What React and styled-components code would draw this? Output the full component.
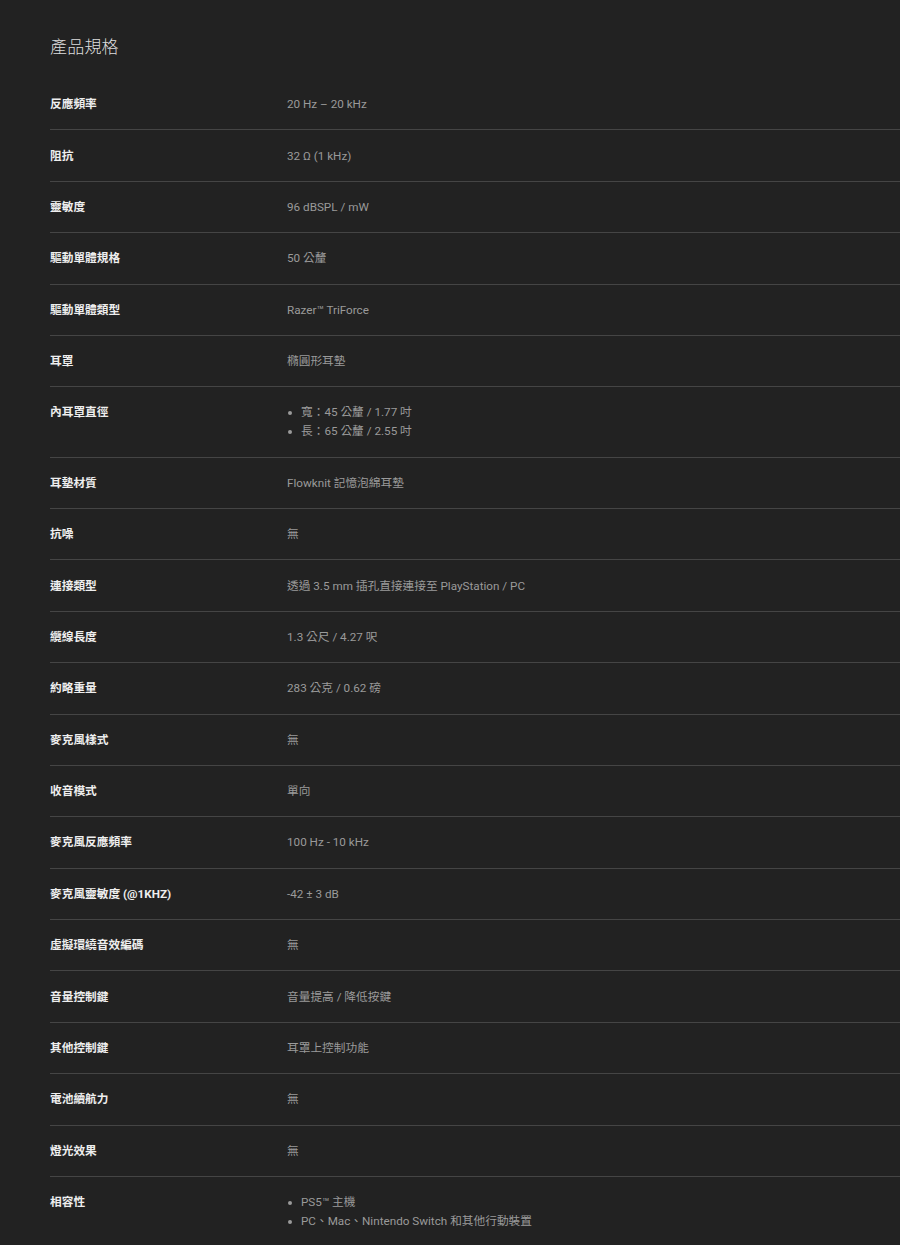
import React from "react";
import styled, { createGlobalStyle } from "styled-components";

const specs = [
  { label: "反應頻率", value: "20 Hz – 20 kHz" },
  { label: "阻抗", value: "32 Ω (1 kHz)" },
  { label: "靈敏度", value: "96 dBSPL / mW" },
  { label: "驅動單體規格", value: "50 公釐" },
  { label: "驅動單體類型", value: "Razer™ TriForce" },
  { label: "耳罩", value: "橢圓形耳墊" },
  { label: "內耳罩直徑", list: ["寬：45 公釐 / 1.77 吋", "長：65 公釐 / 2.55 吋"] },
  { label: "耳墊材質", value: "Flowknit 記憶泡綿耳墊" },
  { label: "抗噪", value: "無" },
  { label: "連接類型", value: "透過 3.5 mm 插孔直接連接至 PlayStation / PC" },
  { label: "纜線長度", value: "1.3 公尺 / 4.27 呎" },
  { label: "約略重量", value: "283 公克 / 0.62 磅" },
  { label: "麥克風樣式", value: "無" },
  { label: "收音模式", value: "單向" },
  { label: "麥克風反應頻率", value: "100 Hz - 10 kHz" },
  { label: "麥克風靈敏度 (@1KHZ)", value: "-42 ± 3 dB" },
  { label: "虛擬環繞音效編碼", value: "無" },
  { label: "音量控制鍵", value: "音量提高 / 降低按鍵" },
  { label: "其他控制鍵", value: "耳罩上控制功能" },
  { label: "電池續航力", value: "無" },
  { label: "燈光效果", value: "無" },
  { label: "相容性", list: ["PS5™ 主機", "PC、Mac、Nintendo Switch 和其他行動裝置"] },
];

const GlobalStyle = createGlobalStyle`
  html, body {
    margin: 0;
    padding: 0;
    background: #222222;
  }
  body {
    font-family: Roboto, "Noto Sans CJK TC", "Noto Sans", sans-serif;
  }
`;

const Section = styled.section`
  background: #222222;
  min-height: 1245px;
  padding: 33.5px 0 0 50px;
  box-sizing: border-box;
`;

const Title = styled.h2`
  margin: 0 0 19.5px;
  font-size: 17px;
  line-height: 26px;
  font-weight: 300;
  color: #dddddd;
  letter-spacing: 0.2px;
`;

const Row = styled.div`
  display: grid;
  grid-template-columns: 237px 1fr;
  padding: 16.2px 0 16.2px;
  border-bottom: ${(p) => (p.$last ? "none" : "1px solid #454545")};
`;

const Label = styled.div`
  font-size: 11.7px;
  line-height: 18px;
  font-weight: 700;
  color: #eeeeee;
`;

const Value = styled.div`
  font-size: 11.7px;
  line-height: 18px;
  color: #9a9a9a;
`;

const List = styled.ul`
  margin: 0;
  padding: 0;
  list-style: none;
  font-size: 11.7px;
  line-height: 18.5px;
  color: #9a9a9a;
`;

const Item = styled.li`
  position: relative;
  padding-left: 14px;
  &::before {
    content: "";
    position: absolute;
    left: 1px;
    top: 8px;
    width: 4px;
    height: 4px;
    border-radius: 50%;
    background: #9a9a9a;
  }
`;

const App = () => {
  return (
    <>
      <GlobalStyle />
      <Section>
        <Title>產品規格</Title>
        {specs.map((s, i) => (
          <Row key={s.label} $last={i === specs.length - 1}>
            <Label>{s.label}</Label>
            {s.list ? (
              <List>
                {s.list.map((t) => (
                  <Item key={t}>{t}</Item>
                ))}
              </List>
            ) : (
              <Value>{s.value}</Value>
            )}
          </Row>
        ))}
      </Section>
    </>
  );
};

export default App;
